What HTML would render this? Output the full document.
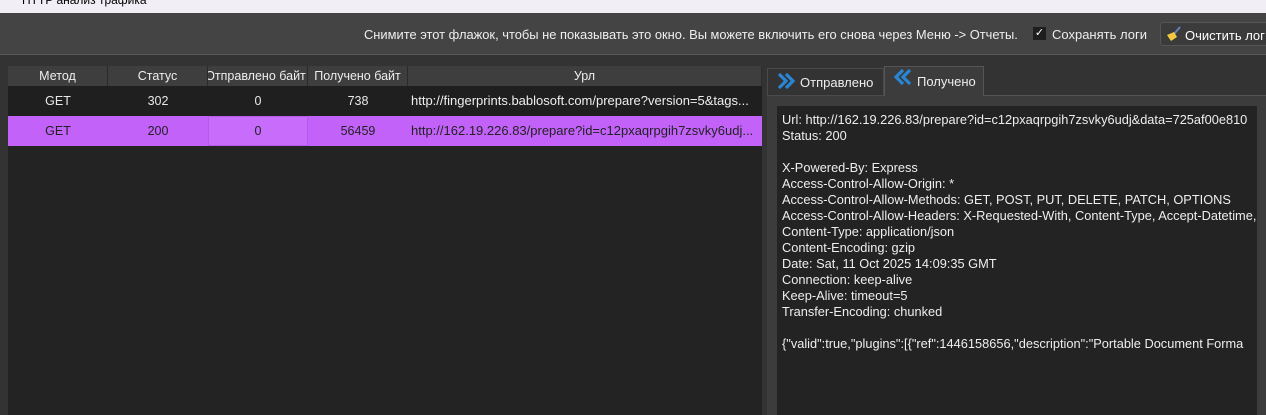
<!DOCTYPE html><html><head><meta charset="utf-8"><style>
*{margin:0;padding:0;box-sizing:border-box}
body{width:1266px;height:415px;overflow:hidden;background:#333;font-family:"Liberation Sans","DejaVu Sans",sans-serif;font-size:12.5px;color:#e8e8e8;position:relative}
.a{position:absolute}
.title{left:0;top:0;width:1266px;height:13px;background:#f2eef5;color:#000;font-size:12px;line-height:0px;padding-left:22px;overflow:hidden}
.tb{left:0;top:13px;width:1266px;height:42px;background:#444;border-bottom:1px solid #5a5a5a}
.hd{top:66px;height:20px;background:#3e3e3e;color:#eee;text-align:center;line-height:20px;border-right:1px solid #2a2a2a;overflow:hidden;white-space:nowrap}
.cell{height:30px;line-height:30px;text-align:center;white-space:nowrap;overflow:hidden}
.pre{font-size:12.8px;line-height:16px;white-space:pre;color:#eee}
</style></head><body>
<div class="a title">HTTP анализ трафика</div>
<div class="a tb"></div>
<div class="a" style="left:364px;top:27px;color:#eee;font-size:12.9px">Снимите этот флажок, чтобы не показывать это окно. Вы можете включить его снова через Меню -&gt; Отчеты.</div>
<div class="a" style="left:1033px;top:27px;width:13px;height:13px;background:#1e1e1e;color:#fff;font-size:11px;line-height:13px;text-align:center">✓</div>
<div class="a" style="left:1052px;top:27px;color:#eee;font-size:13px">Сохранять логи</div>
<div class="a" style="left:1160px;top:22px;width:110px;height:24px;background:#3b3b3b;border:1px solid #555;border-radius:3px"></div>
<svg class="a" style="left:1164px;top:25px" width="20" height="18"><line x1="16" y1="2" x2="10" y2="9" stroke="#6a7fc0" stroke-width="2"/><path d="M3 10 L10 7 L13 12 L7 16 Z" fill="#f5c842"/></svg>
<div class="a" style="left:1185px;top:28px;color:#fff;font-size:13px">Очистить лог</div>

<div class="a" style="left:8px;top:66px;width:754px;height:349px;background:#232323"></div>
<div class="a hd" style="left:8px;width:100px">Метод</div>
<div class="a hd" style="left:108px;width:100px">Статус</div>
<div class="a hd" style="left:208px;width:100px;text-indent:-4px">Отправлено байт</div>
<div class="a hd" style="left:308px;width:100px">Получено байт</div>
<div class="a hd" style="left:408px;width:354px">Урл</div>
<div class="a" style="left:8px;top:86px;width:754px;height:30px;background:#1f1f1f"></div>
<div class="a cell" style="left:8px;top:86px;width:100px">GET</div>
<div class="a cell" style="left:108px;top:86px;width:100px">302</div>
<div class="a cell" style="left:208px;top:86px;width:100px">0</div>
<div class="a cell" style="left:308px;top:86px;width:100px">738</div>
<div class="a cell" style="left:411px;top:86px;text-align:left;color:#eee;font-size:13px">http://fingerprints.bablosoft.com/prepare?version=5&amp;tags...</div>
<div class="a" style="left:8px;top:116px;width:754px;height:30px;background:#c262f9"></div>
<div class="a" style="left:208px;top:116px;width:100px;height:30px;background:#c76cfb;border:1px solid #b85ae8"></div>
<div class="a cell" style="left:8px;top:116px;width:100px;color:#222">GET</div>
<div class="a cell" style="left:108px;top:116px;width:100px;color:#222">200</div>
<div class="a cell" style="left:208px;top:116px;width:100px;color:#222">0</div>
<div class="a cell" style="left:308px;top:116px;width:100px;color:#222">56459</div>
<div class="a cell" style="left:411px;top:116px;text-align:left;color:#222;font-size:13px">http://162.19.226.83/prepare?id=c12pxaqrpgih7zsvky6udj...</div>

<div class="a" style="left:767px;top:95px;width:499px;height:320px;background:#3c3c3c;border-top:1px solid #555"></div>
<div class="a" style="left:767px;top:68px;width:117px;height:28px;background:#333;border:1px solid #4a4a4a"></div>
<div class="a" style="left:884px;top:66px;width:100px;height:30px;background:#3c3c3c;border:1px solid #555;border-bottom:none"></div>
<svg class="a" style="left:777px;top:72px" width="22" height="18"><path d="M2 2 L9 9 L2 16 M9 2 L16 9 L9 16" fill="none" stroke="#2a86d4" stroke-width="3.2"/></svg>
<div class="a" style="left:800px;top:75px;color:#eee;font-size:13px">Отправлено</div>
<svg class="a" style="left:893px;top:68px" width="22" height="18"><path d="M10 2 L3 9 L10 16 M17 2 L10 9 L17 16" fill="none" stroke="#2a86d4" stroke-width="3.2"/></svg>
<div class="a" style="left:917px;top:74px;color:#eee;font-size:13px">Получено</div>
<div class="a" style="left:777px;top:106px;width:480px;height:309px;background:#232323;overflow:hidden">
<div class="pre" style="padding:6px 0 0 5px">Url: http://162.19.226.83/prepare?id=c12pxaqrpgih7zsvky6udj&amp;data=725af00e810
Status: 200

X-Powered-By: Express
Access-Control-Allow-Origin: *
Access-Control-Allow-Methods: GET, POST, PUT, DELETE, PATCH, OPTIONS
Access-Control-Allow-Headers: X-Requested-With, Content-Type, Accept-Datetime,
Content-Type: application/json
Content-Encoding: gzip
Date: Sat, 11 Oct 2025 14:09:35 GMT
Connection: keep-alive
Keep-Alive: timeout=5
Transfer-Encoding: chunked

{"valid":true,"plugins":[{"ref":1446158656,"description":"Portable Document Forma</div></div>
</body></html>
